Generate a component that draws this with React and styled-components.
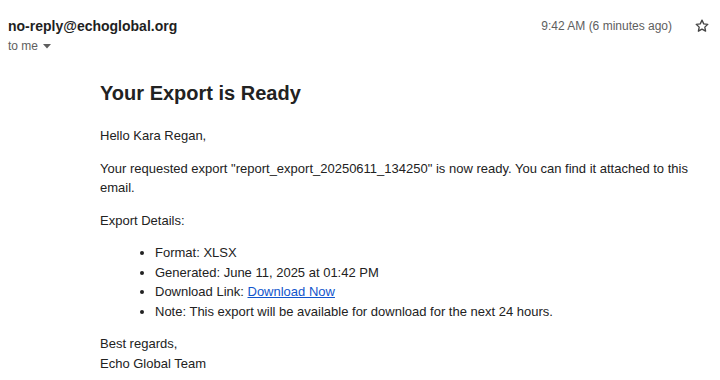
import React from "react";
import styled, { createGlobalStyle } from "styled-components";

const Global = createGlobalStyle`
  body {
    margin: 0;
    background: #fff;
    font-family: "Liberation Sans", Arial, sans-serif;
  }
`;

const Page = styled.div`
  width: 720px;
  height: 380px;
  overflow: hidden;
`;

const Header = styled.div`
  display: flex;
  justify-content: space-between;
  align-items: flex-start;
  padding: 16px 0 0 8px;
`;

const Sender = styled.div`
  display: flex;
  flex-direction: column;
`;

const From = styled.div`
  font-size: 14px;
  font-weight: 700;
  color: #1f1f1f;
  line-height: 20px;
`;

const To = styled.div`
  display: flex;
  align-items: center;
  gap: 4px;
  font-size: 12px;
  color: #5e5e5e;
  line-height: 20px;
`;

const Meta = styled.div`
  display: flex;
  align-items: center;
  gap: 22px;
  padding-right: 10px;
  font-size: 12px;
  color: #5e5e5e;
  line-height: 20px;
`;

const Body = styled.div`
  width: 600px;
  margin: 25px 0 0 100px;
  font-size: 13px;
  line-height: 19.5px;
  color: #222;
`;

const Title = styled.h1`
  margin: 0 0 21px;
  font-size: 20px;
  font-weight: 700;
  line-height: 24px;
  color: #222;
`;

const Para = styled.p`
  margin: 0 0 ${(p) => (p.$gap !== undefined ? p.$gap : 13)}px;
`;

const List = styled.ul`
  margin: 0 0 13px;
  padding-left: 55px;
`;

const DownloadLink = styled.a`
  color: #1155cc;
  text-decoration: underline;
`;

function Star() {
  return (
    <svg width="16" height="16" viewBox="0 0 24 24" fill="none" stroke="#444" strokeWidth="2" strokeLinejoin="round">
      <path d="M12 3.2l2.6 5.6 6.1.7-4.5 4.2 1.2 6.1L12 16.8l-5.4 3 1.2-6.1-4.5-4.2 6.1-.7z" />
    </svg>
  );
}

function Caret() {
  return (
    <svg width="10" height="10" viewBox="0 0 10 10">
      <path d="M1 3h8L5 7.5z" fill="#5e5e5e" />
    </svg>
  );
}

export default function App() {
  return (
    <Page>
      <Global />
      <Header>
        <Sender>
          <From>no-reply@echoglobal.org</From>
          <To>
            to me <Caret />
          </To>
        </Sender>
        <Meta>
          <span>9:42 AM (6 minutes ago)</span>
          <Star />
        </Meta>
      </Header>
      <Body>
        <Title>Your Export is Ready</Title>
        <Para>Hello Kara Regan,</Para>
        <Para>
          Your requested export "report_export_20250611_134250" is now ready. You can find it attached to this email.
        </Para>
        <Para>Export Details:</Para>
        <List>
          <li>Format: XLSX</li>
          <li>Generated: June 11, 2025 at 01:42 PM</li>
          <li>
            Download Link: <DownloadLink href="#">Download Now</DownloadLink>
          </li>
          <li>Note: This export will be available for download for the next 24 hours.</li>
        </List>
        <Para $gap={0}>
          Best regards,
          <br />
          Echo Global Team
        </Para>
      </Body>
    </Page>
  );
}
